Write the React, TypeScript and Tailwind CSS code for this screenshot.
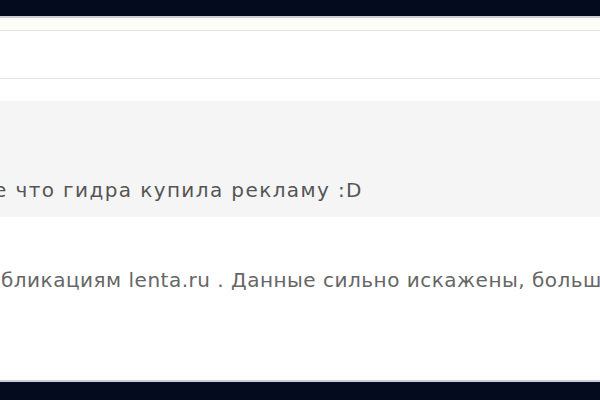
import React from 'react';

const font = { fontFamily: '"DejaVu Sans", "Noto Sans", sans-serif' };

export default function App() {
  return (
    <div className="w-[600px] h-[400px] bg-[#040b1e] overflow-hidden flex flex-col" style={font}>
      <div className="h-[16px] shrink-0" />
      <div className="flex-1 flex flex-col bg-white border-t-2 border-b-2 border-[#c9ced8] overflow-hidden">
        <div className="h-[13px] shrink-0 bg-[#fdfdf8] border-b border-[#e4e4e4]" />
        <div className="h-[48px] shrink-0 bg-white border-b border-[#e4e4e4]" />
        <div className="h-[22px] shrink-0" />
        <div className="h-[116px] shrink-0 bg-[#f5f5f5] flex items-end pb-[13px] overflow-hidden">
          <p className="whitespace-nowrap text-[20px] leading-[28px] tracking-[1.4px] text-[#555] -ml-[6px]">
            е что гидра купила рекламу :D
          </p>
        </div>
        <div className="flex-1 pt-[50px] overflow-hidden">
          <p className="whitespace-nowrap text-[20px] leading-[26px] tracking-[0.5px] text-[#666] pl-[1px]">
            бликациям lenta.ru . Данные сильно искажены, больш
          </p>
        </div>
      </div>
      <div className="h-[18px] shrink-0" />
    </div>
  );
}
